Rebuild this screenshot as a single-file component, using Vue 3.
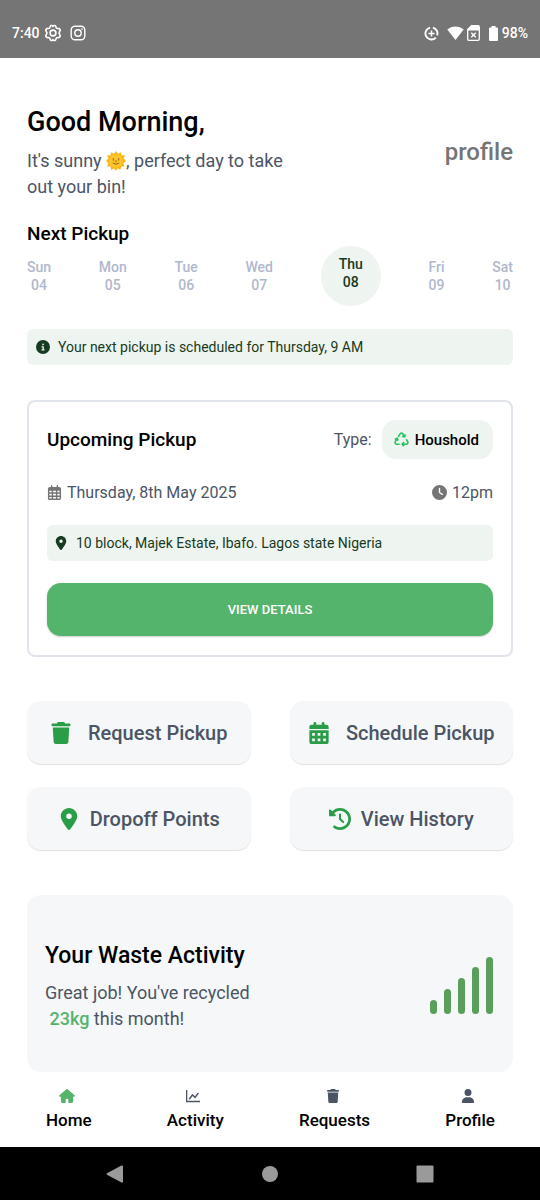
<script setup>
const icons = {
  info: { box: '0 0 512 512', d: 'M256 512A256 256 0 1 0 256 0a256 256 0 1 0 0 512zM216 336h24V272H216c-13.3 0-24-10.7-24-24s10.7-24 24-24h48c13.3 0 24 10.7 24 24v88h8c13.3 0 24 10.7 24 24s-10.7 24-24 24H216c-13.3 0-24-10.7-24-24s10.7-24 24-24zm40-208a32 32 0 1 1 0 64 32 32 0 1 1 0-64z' },
  pin: { box: '-64 0 512 512', d: 'M215.7 499.2C267 435 384 279.4 384 192C384 86 298 0 192 0S0 86 0 192c0 87.4 117 243 168.3 307.2c12.3 15.3 35.1 15.3 47.4 0zM192 128a64 64 0 1 1 0 128 64 64 0 1 1 0-128z' },
  clock: { box: '0 0 512 512', d: 'M256 0a256 256 0 1 1 0 512A256 256 0 1 1 256 0zM232 120V256c0 8 4 15.5 10.7 20l96 64c11 7.4 25.9 4.4 33.3-6.7s4.4-25.9-6.7-33.3L280 243.2V120c0-13.3-10.7-24-24-24s-24 10.7-24 24z' },
  calendar: { box: '-32 0 512 512', d: 'M128 0c17.7 0 32 14.3 32 32V64H288V32c0-17.7 14.3-32 32-32s32 14.3 32 32V64h48c26.5 0 48 21.5 48 48v48H0V112C0 85.5 21.5 64 48 64H96V32c0-17.7 14.3-32 32-32zM0 192H448V464c0 26.5-21.5 48-48 48H48c-26.5 0-48-21.5-48-48zM64 256v64h64v-64zm128 0v64h64v-64zm128 0v64h64v-64zM64 384v64h64v-64zm128 0v64h64v-64zm128 0v64h64v-64z' },
  grid: { box: '-32 0 512 512', d: 'M152 24c0-13.3-10.7-24-24-24s-24 10.7-24 24V64H64C28.7 64 0 92.7 0 128v16 48V448c0 35.3 28.7 64 64 64H384c35.3 0 64-28.7 64-64V192 144 128c0-35.3-28.7-64-64-64H344V24c0-13.3-10.7-24-24-24s-24 10.7-24 24V64H152zM48 192h80v56H48zm0 104h80v64H48zm128 0h96v64H176zm144 0h80v64H320zM400 248H320V192h80zm0 160v40c0 8.8-7.2 16-16 16H320V408zM272 408v56H176V408zM128 408v56H64c-8.8 0-16-7.2-16-16V408zM272 248H176V192h96z' },
  trash: { box: '-32 0 512 512', d: 'M135.2 17.7L128 32H32C14.3 32 0 46.3 0 64S14.3 96 32 96H416c17.7 0 32-14.3 32-32s-14.3-32-32-32H320l-7.2-14.3C307.4 6.8 296.3 0 284.2 0H163.8c-12.1 0-23.2 6.8-28.6 17.7zM416 128H32L53.2 467c1.6 25.3 22.6 45 47.9 45H346.9c25.3 0 46.3-19.7 47.9-45z' },
  history: { box: '0 0 512 512', d: 'M75 75L41 41C25.9 25.9 0 36.6 0 57.9V168c0 13.3 10.7 24 24 24H134.1c21.4 0 32.1-25.9 17-41l-30.8-30.8C155 85.5 203 64 256 64c106 0 192 86 192 192s-86 192-192 192c-40.8 0-78.6-12.7-109.7-34.4c-14.5-10.1-34.4-6.6-44.6 7.9s-6.6 34.4 7.9 44.6C151.2 495 201.7 512 256 512c141.4 0 256-114.6 256-256S397.4 0 256 0C185.3 0 121.3 28.7 75 75zm181 53c-13.3 0-24 10.7-24 24V256c0 6.4 2.5 12.5 7 17l72 72c9.4 9.4 24.6 9.4 33.9 0s9.4-24.6 0-33.9l-65-65V152c0-13.3-10.7-24-24-24z' },
  home: { box: '0 0 576 512', d: 'M575.8 255.5c0 18-15 32.1-32 32.1h-32l.7 160.2c0 35-26 64.2-62 64.2H360c-13 0-24-11-24-24V384c0-18-14-32-32-32h-32c-18 0-32 14-32 32v104c0 13-11 24-24 24H128c-36 0-64-28-64-64V287.6H32c-18 0-32-14-32-32.1c0-9 3-17 10-24L266.4 8c7-7 15-8 22-8s15 2 21 7L564.8 231.5c8 7 12 15 11 24z' },
  user: { box: '-32 0 512 512', d: 'M224 256A128 128 0 1 0 224 0a128 128 0 1 0 0 256zm-45.7 48C79.8 304 0 383.8 0 482.3C0 498.7 13.3 512 29.7 512H418.3c16.4 0 29.7-13.3 29.7-29.7C448 383.8 368.2 304 269.7 304z' },
  chart: { box: '0 0 16 16', d: 'M0 1h1.500v12.500H16V15H0zM3 11.200 6.600 6.200a.9.9 0 0 1 1.300-.1l2.400 2.200 3.200-4.200 1.300 1-3.700 5a.9.9 0 0 1-1.300.1L7.500 8.100 4.400 12.200z' },
}
const days = [
  ['Sun', '04'], ['Mon', '05'], ['Tue', '06'], ['Wed', '07'],
  ['Thu', '08'], ['Fri', '09'], ['Sat', '10'],
]
const selected = '08'
const actions = [
  { label: 'Request Pickup', icon: 'trash' },
  { label: 'Schedule Pickup', icon: 'calendar' },
  { label: 'Dropoff Points', icon: 'pin' },
  { label: 'View History', icon: 'history' },
]
const levels = [14, 25, 36, 47, 57]
const tabs = [
  { label: 'Home', icon: 'home' },
  { label: 'Activity', icon: 'chart' },
  { label: 'Requests', icon: 'trash' },
  { label: 'Profile', icon: 'user' },
]
</script>

<template>
  <div class="screen">
    <header class="status">
      <div class="status-group">
        <span>7:40</span>
        <svg class="gear" viewBox="0 0 18 18" fill="none" stroke="currentColor" stroke-width="1.600" stroke-linejoin="round">
          <path d="M6.700 1.500h1.500L9 2.400l.8-.9h1.500l1.200 2.700 2.900.4.900 1.600L15 9l1.300 2.800-.9 1.600-2.900.4-1.200 2.700H9.800L9 15.600l-.8.9H6.700l-1.200-2.700-2.900-.4-.9-1.600L3 9 1.700 6.200l.9-1.600 2.900-.4z" />
          <circle cx="9" cy="9" r="2.900" />
        </svg>
        <svg class="camera" viewBox="0 0 16 16" fill="none" stroke="currentColor" stroke-width="1.400">
          <rect x="1.200" y="1.200" width="13.600" height="13.600" rx="3.800" />
          <circle cx="8" cy="8" r="3.200" />
          <circle cx="12" cy="4" r=".5" fill="currentColor" stroke-width=".6" />
        </svg>
      </div>
      <div class="status-group">
        <svg class="saver" viewBox="0 0 16 16" fill="none" stroke="currentColor" stroke-width="2">
          <path d="M9.500 1.700a6.400 6.400 0 0 1 4.500 8.300M12.700 12.300A6.400 6.400 0 1 1 6.500 1.800" />
          <path d="M8 4.800v6.400M4.800 8h6.400" stroke-width="1.600" />
        </svg>
        <svg class="wifi" viewBox="0 0 17 14" fill="currentColor"><path d="M8.500 14 .3 3.600C5-.6 12-.6 16.700 3.600z" /></svg>
        <svg class="sim" viewBox="0 0 13 16" fill="none" stroke="currentColor" stroke-width="1.300">
          <path d="M4.500.7H11c.8 0 1.300.5 1.300 1.300v12c0 .8-.5 1.300-1.300 1.300H2c-.8 0-1.300-.5-1.300-1.300V4.500z" />
          <path d="M4.500.7H12V5.500H.7v-1z" fill="currentColor" stroke="none" />
          <path d="m4.300 7.800 4.400 4.400m0-4.400-4.400 4.400" stroke-width="1.400" />
        </svg>
        <svg class="battery" viewBox="0 0 9 15" fill="currentColor"><path d="M2.500 0h4v1.500H8a1 1 0 0 1 1 1V14a1 1 0 0 1-1 1H1a1 1 0 0 1-1-1V2.500a1 1 0 0 1 1-1h1.500z" /></svg>
        <span>98%</span>
      </div>
    </header>

    <main>
      <section class="greeting">
        <div>
          <h1>Good Morning,</h1>
          <p class="lead">It's sunny
            <svg class="sun" viewBox="0 0 20 20" role="img" aria-label="sun">
              <path fill="#fbb413" d="m10 0 2 3 3-1.700.5 3.300 3.500-.4-1.300 3.300L20 10l-2.700 2.200 1.300 3.300-3.500.1-.6 3.400-3-1.700L10 20l-1.800-2.700-3 1.700-.6-3.400-3.500-.1 1.300-3.300L0 10l2.400-2.500L1 4.200l3.500.4L5 1.300 8 3z" />
              <circle cx="10" cy="10" r="6.800" fill="#fdc72b" />
              <path d="M7.300 7.500v1.800M12.700 7.500v1.800M7 12.200q3 2.400 6 0M10 9.500v1.500" fill="none" stroke="#a85f12" stroke-width="1" stroke-linecap="round" />
            </svg>, perfect day to take<br />out your bin!</p>
        </div>
        <a class="profile" href="#profile">profile</a>
      </section>

      <h2>Next Pickup</h2>
      <div class="days">
        <button v-for="[name, date] in days" :key="date" type="button" class="day" :class="{ on: date === selected }">
          {{ name }}<br />{{ date }}
        </button>
      </div>

      <p class="note">
        <svg :viewBox="icons.info.box" fill="currentColor"><path fill-rule="evenodd" :d="icons.info.d" /></svg>
        Your next pickup is scheduled for Thursday, 9 AM
      </p>

      <section class="card">
        <div class="row">
          <h2>Upcoming Pickup</h2>
          <div class="type">
            Type:
            <span class="chip">
              <svg viewBox="0 0 16 16" fill="none" stroke="currentColor" stroke-width="1.700">
                <path d="M4.500 5.200 6.700 1.800q1.300-1.600 2.600 0l1.800 3M8.700 4.700l2.700.4.600-2.600M13 7.500l1.700 2.900q.7 2.100-1.500 2.600H9M10.800 10.800 8.700 13l2.100 2.200M6 13H2.800q-2.200-.5-1.500-2.600L3.500 6.700M.8 7.700l2.700-.9.800 2.600" />
              </svg>
              Houshold
            </span>
          </div>
        </div>
        <div class="row when">
          <span><svg :viewBox="icons.grid.box" fill="currentColor"><path fill-rule="evenodd" :d="icons.grid.d" /></svg>Thursday, 8th May 2025</span>
          <span><svg :viewBox="icons.clock.box" fill="currentColor"><path fill-rule="evenodd" :d="icons.clock.d" /></svg>12pm</span>
        </div>
        <p class="note place">
          <svg :viewBox="icons.pin.box" fill="currentColor"><path fill-rule="evenodd" :d="icons.pin.d" /></svg>
          10 block, Majek Estate, Ibafo. Lagos state Nigeria
        </p>
        <button type="button" class="details">VIEW DETAILS</button>
      </section>

      <section class="actions">
        <button v-for="a in actions" :key="a.label" type="button" class="action" :class="a.icon">
          <svg :viewBox="icons[a.icon].box" fill="currentColor"><path fill-rule="evenodd" :d="icons[a.icon].d" /></svg>
          <span>{{ a.label }}</span>
        </button>
      </section>

      <section class="activity">
        <div>
          <h2>Your Waste Activity</h2>
          <p class="lead">Great job! You've recycled<br />&nbsp;<strong>23kg</strong> this month!</p>
        </div>
        <div class="bars">
          <i v-for="h in levels" :key="h" :style="{ height: h + 'px' }"></i>
        </div>
      </section>
    </main>

    <nav class="tabs">
      <a v-for="t in tabs" :key="t.label" href="#" :class="{ current: t.icon === 'home' }">
        <svg :viewBox="icons[t.icon].box" fill="currentColor"><path fill-rule="evenodd" :d="icons[t.icon].d" /></svg>
        <span>{{ t.label }}</span>
      </a>
    </nav>

    <footer class="system">
      <button type="button" aria-label="Back"><svg viewBox="0 0 18 18"><path d="M1 8.200 15.500.5Q17 0 17 1.500v15q0 1.500-1.500 1L1 9.800Q0 9 1 8.200z" /></svg></button>
      <button type="button" aria-label="Home"><svg viewBox="0 0 18 18"><circle cx="9" cy="9" r="8" /></svg></button>
      <button type="button" aria-label="Recents"><svg viewBox="0 0 18 18"><rect x=".5" y=".5" width="17" height="17" rx="1" /></svg></button>
    </footer>
  </div>
</template>

<style>
body { margin: 0; background: #fff; }
</style>

<style scoped>
* { box-sizing: border-box; }
.screen {
  min-height: 100vh;
  display: flex;
  flex-direction: column;
  font-family: Roboto, "Noto Sans", sans-serif;
  font-weight: 500;
  color: #000;
}
svg { display: block; flex: none; }
h1, h2, p { margin: 0; font-weight: 500; }
button { font: inherit; border: 0; padding: 0; background: none; color: inherit; }
a { color: inherit; text-decoration: none; }

.status {
  height: 58px;
  padding: 8px 12px 0;
  display: flex;
  justify-content: space-between;
  align-items: center;
  background: #757575;
  color: #fff;
  font-size: 14px;
}
.status-group { display: flex; align-items: center; }
.gear { width: 18px; height: 18px; margin: 0 8px 0 4px; }
.camera { width: 16px; height: 16px; }
.saver { width: 15px; height: 15px; margin-right: 8px; }
.wifi { width: 17px; height: 14px; margin-right: 3px; }
.sim { width: 13px; height: 16px; margin-right: 9px; }
.battery { width: 9px; height: 15px; margin-right: 4px; }

main { padding: 46px 27px 0; display: flex; flex-direction: column; }
.greeting { display: flex; justify-content: space-between; align-items: center; }
h1 { font-size: 27px; line-height: 36px; margin-bottom: 8px; }
h2 { font-size: 19px; line-height: 24px; }
.lead { font-size: 18px; line-height: 26px; font-weight: 400; color: #4b5565; white-space: nowrap; }
.sun { display: inline-block; width: 20px; height: 20px; vertical-align: -4px; }
.profile { font-size: 24px; line-height: 30px; color: #757575; }
.greeting + h2 { margin-top: 22px; }

.days { display: flex; justify-content: space-between; align-items: center; height: 60px; margin-bottom: 23px; }
.day { font-size: 14px; line-height: 18px; color: #b0b8cc; text-align: center; }
.day.on { width: 60px; height: 60px; padding-bottom: 6px; border-radius: 50%; background: #eef4f0; color: #173b22; }

.note {
  display: flex;
  align-items: center;
  gap: 8px;
  height: 36px;
  padding: 0 9px;
  border-radius: 6px;
  background: #eef4f0;
  color: #173b22;
  font-size: 14px;
  font-weight: 400;
}
.note svg { width: 14px; height: 14px; }

.card { margin-top: 35px; padding: 18px 18px 19px; border: 2px solid #e1e5eb; border-radius: 8px; }
.row { display: flex; justify-content: space-between; align-items: center; }
.type { display: flex; align-items: center; gap: 10px; font-size: 16px; font-weight: 400; color: #4b5565; }
.chip { display: flex; align-items: center; gap: 6px; height: 39px; padding: 0 14px 0 12px; border-radius: 14px; background: #eef4f0; color: #000; font-size: 15px; font-weight: 500; }
.chip svg { width: 15px; height: 15px; color: #22c55e; }
.when { height: 24px; margin: 21px 0; font-size: 16px; font-weight: 400; color: #4b5565; }
.when span { display: flex; align-items: center; gap: 5px; }
.when svg { width: 15px; height: 15px; color: #757575; }
.place { padding: 0 7px; }
.details { display: block; width: 100%; height: 53px; margin-top: 22px; border-radius: 14px; background: #55b46b; color: #fff; font-size: 13px; box-shadow: 0 1px 2px rgba(0, 0, 0, 0.2); }

.actions { display: grid; grid-template-columns: 1fr 1fr; gap: 23px 39px; margin-top: 44px; }
.action { display: flex; justify-content: center; align-items: center; gap: 16px; height: 63px; border-radius: 14px; background: #f5f7f9; color: #4b5565; font-size: 20px; white-space: nowrap; box-shadow: 0 1px 1px rgba(0, 0, 0, 0.12); }
.action svg { width: 22px; height: 22px; color: #2a9d48; }
.action.pin, .action.history { gap: 10px; }

.activity { display: flex; justify-content: space-between; align-items: center; height: 177px; margin-top: 45px; padding: 4px 20px 0 18px; border-radius: 14px; background: #f5f7f9; }
.activity h2 { font-size: 23px; line-height: 32px; margin-bottom: 8px; }
.activity strong { font-weight: 500; color: #55b46b; }
.bars { display: flex; align-items: flex-end; gap: 7px; }
.bars i { width: 7px; border-radius: 4px; background: #5a9e5c; }

.tabs { display: flex; justify-content: space-between; flex: 1; padding: 17px 45px 0 46px; }
.tabs a { display: flex; flex-direction: column; align-items: center; gap: 4px; font-size: 17px; line-height: 26px; }
.tabs svg { width: 16px; height: 14px; margin-right: 4px; color: #4b5565; }
.tabs .current svg { color: #55b46b; }

.system { display: flex; justify-content: center; align-items: center; gap: 137px; height: 53px; background: #000; }
.system svg { width: 18px; height: 18px; fill: #9a9a9a; }
</style>
